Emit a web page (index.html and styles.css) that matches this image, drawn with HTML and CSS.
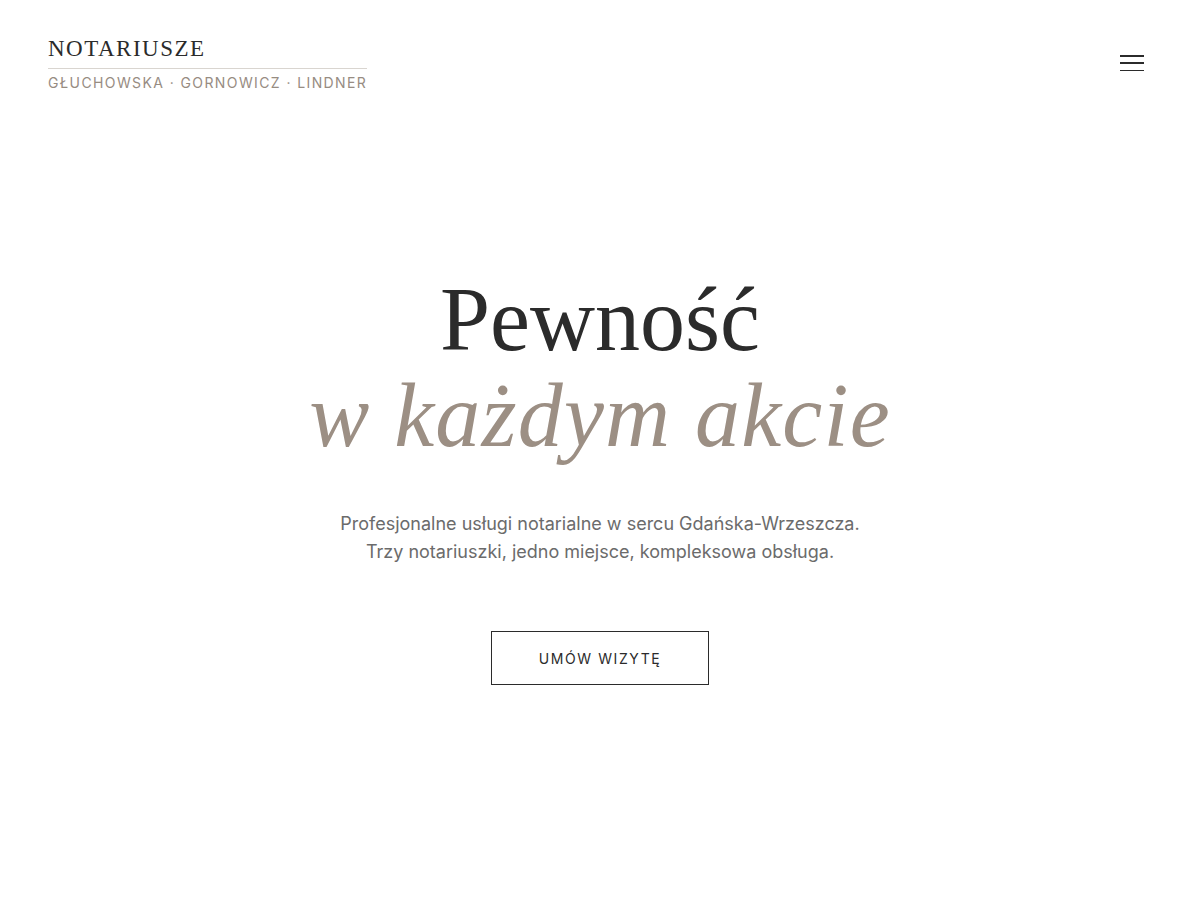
FILE: index.html
```html
<!DOCTYPE html>
<html lang="pl">
<head>
<meta charset="utf-8">
<title>Notariusze Głuchowska · Gornowicz · Lindner</title>
<link rel="stylesheet" href="styles.css">
</head>
<body>
<header class="header">
  <a class="logo" href="#">
    <span class="logo-title">NOTARIUSZE</span>
    <span class="logo-sub">GŁUCHOWSKA · GORNOWICZ · LINDNER</span>
  </a>
  <button class="menu" aria-label="Menu">
    <span></span><span></span><span></span>
  </button>
</header>
<main class="hero">
  <h1 class="hero-title">Pewność<br><em>w każdym akcie</em></h1>
  <p class="hero-text">Profesjonalne usługi notarialne w sercu Gdańska-Wrzeszcza.<br>Trzy notariuszki, jedno miejsce, kompleksowa obsługa.</p>
  <a class="btn" href="#">UMÓW WIZYTĘ</a>
</main>
</body>
</html>
```

FILE: styles.css
```css
* { box-sizing: border-box; }
html, body { margin: 0; padding: 0; background: #ffffff; }
body {
  font-family: "Inter", "Liberation Sans", sans-serif;
  color: #2b2b2b;
  height: 900px;
  overflow: hidden;
}
.header {
  display: flex;
  justify-content: space-between;
  align-items: flex-start;
  padding: 35px 56px 0 48px;
}
.logo {
  display: inline-flex;
  flex-direction: column;
  text-decoration: none;
}
.logo-title {
  font-family: "Liberation Serif", "DejaVu Serif", serif;
  font-size: 23px;
  letter-spacing: 1.5px;
  color: #2b2b2b;
  line-height: 28px;
  padding-bottom: 5px;
  border-bottom: 1px solid #d9d5d0;
}
.logo-sub {
  font-size: 14px;
  letter-spacing: 1.4px;
  color: #978c82;
  line-height: 20px;
  margin-top: 4px;
}
.menu {
  margin-top: 20px;
  width: 24px;
  height: 16px;
  padding: 0;
  border: 0;
  background: transparent;
  display: flex;
  flex-direction: column;
  justify-content: space-between;
  cursor: pointer;
}
.menu span {
  display: block;
  height: 1.5px;
  background: #2b2b2b;
}
.hero {
  display: flex;
  flex-direction: column;
  align-items: center;
  text-align: center;
  padding-top: 179px;
}
.hero-title {
  margin: 0;
  font-family: "Liberation Serif", "DejaVu Serif", serif;
  font-weight: 400;
  font-size: 90px;
  line-height: 96px;
  color: #2b2b2b;
}
.hero-title em {
  font-style: italic;
  color: #9c8f84;
  letter-spacing: 1.2px;
}
.hero-text {
  margin: 46px 0 0;
  font-size: 18px;
  line-height: 28px;
  color: #6b6b6b;
}
.btn {
  margin-top: 65px;
  display: inline-flex;
  align-items: center;
  justify-content: center;
  width: 218px;
  height: 54px;
  border: 1px solid #2b2b2b;
  font-size: 14px;
  letter-spacing: 1.6px;
  color: #2b2b2b;
  text-decoration: none;
}
```
